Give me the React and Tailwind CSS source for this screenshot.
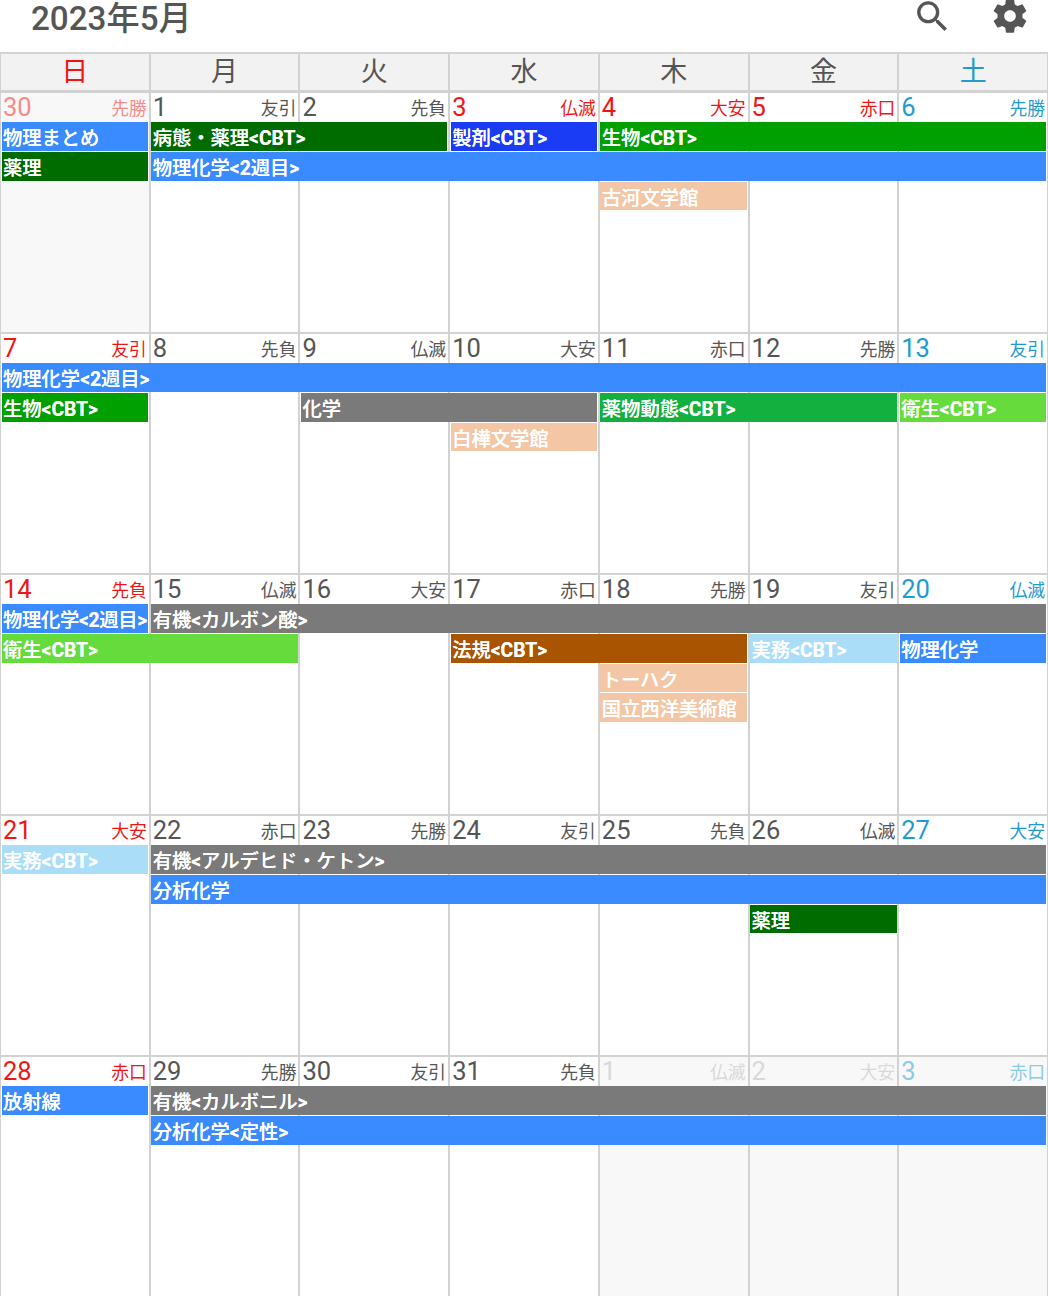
const COL = ['col-start-1','col-start-2','col-start-3','col-start-4','col-start-5','col-start-6','col-start-7'];
const SPAN = ['', 'col-span-1','col-span-2','col-span-3','col-span-4','col-span-5','col-span-6','col-span-7'];
const ROW = ['row-start-2','row-start-3','row-start-4','row-start-5'];

const BLUE = 'bg-[#3a8bff]';
const DARK = 'bg-[#006c00]';
const GREEN = 'bg-[#00a000]';
const GRAY = 'bg-[#7a7a7a]';
const PEACH = 'bg-[#f3c6a5]';
const LIME = 'bg-[#66dc3c]';
const SKY = 'bg-[#aaddf8]';

const RED = 'text-[#f01515]';
const SAT = 'text-[#1f9bd1]';
const DEF = 'text-[#555555]';
const PINK = 'text-[#f88a8a]';
const FADE = 'text-[#d8d8d8]';
const SATF = 'text-[#8accE4]';

const WEEKS = [
  {
    days: [
      ['30','先勝',PINK,true],['1','友引',DEF],['2','先負',DEF],['3','仏滅',RED],['4','大安',RED],['5','赤口',RED],['6','先勝',SAT],
    ],
    events: [
      [0,0,1,'物理まとめ',BLUE],[0,1,2,'病態・薬理<CBT>',DARK],[0,3,1,'製剤<CBT>','bg-[#1a3cf5]'],[0,4,3,'生物<CBT>',GREEN],
      [1,0,1,'薬理',DARK],[1,1,6,'物理化学<2週目>',BLUE],
      [2,4,1,'古河文学館',PEACH],
    ],
  },
  {
    days: [
      ['7','友引',RED],['8','先負',DEF],['9','仏滅',DEF],['10','大安',DEF],['11','赤口',DEF],['12','先勝',DEF],['13','友引',SAT],
    ],
    events: [
      [0,0,7,'物理化学<2週目>',BLUE],
      [1,0,1,'生物<CBT>',GREEN],[1,2,2,'化学',GRAY],[1,4,2,'薬物動態<CBT>','bg-[#13b040]'],[1,6,1,'衛生<CBT>',LIME],
      [2,3,1,'白樺文学館',PEACH],
    ],
  },
  {
    days: [
      ['14','先負',RED],['15','仏滅',DEF],['16','大安',DEF],['17','赤口',DEF],['18','先勝',DEF],['19','友引',DEF],['20','仏滅',SAT],
    ],
    events: [
      [0,0,1,'物理化学<2週目>',BLUE,'tracking-[-0.3px]'],[0,1,6,'有機<カルボン酸>',GRAY],
      [1,0,2,'衛生<CBT>',LIME],[1,3,2,'法規<CBT>','bg-[#a85400]'],[1,5,1,'実務<CBT>',SKY],[1,6,1,'物理化学',BLUE],
      [2,4,1,'トーハク',PEACH],[3,4,1,'国立西洋美術館',PEACH],
    ],
  },
  {
    days: [
      ['21','大安',RED],['22','赤口',DEF],['23','先勝',DEF],['24','友引',DEF],['25','先負',DEF],['26','仏滅',DEF],['27','大安',SAT],
    ],
    events: [
      [0,0,1,'実務<CBT>',SKY],[0,1,6,'有機<アルデヒド・ケトン>',GRAY],
      [1,1,6,'分析化学',BLUE],
      [2,5,1,'薬理',DARK],
    ],
  },
  {
    days: [
      ['28','赤口',RED],['29','先勝',DEF],['30','友引',DEF],['31','先負',DEF],['1','仏滅',FADE,true],['2','大安',FADE,true],['3','赤口',SATF,true],
    ],
    events: [
      [0,0,1,'放射線',BLUE],[0,1,6,'有機<カルボニル>',GRAY],
      [1,1,6,'分析化学<定性>',BLUE],
    ],
  },
];

const HEAD = [['日',RED],['月',DEF],['火',DEF],['水',DEF],['木',DEF],['金',DEF],['土',SAT]];

function Label({ text }) {
  return text.split(/([\x00-\x7f]+)/).map((part, i) =>
    i % 2 === 1 ? (
      <span key={i} className="font-bold">{part}</span>
    ) : (
      <span key={i}>{part}</span>
    ),
  );
}

function Week({ week }) {
  return (
    <div className="-ml-px grid h-[241px] w-[1049px] grid-cols-7 grid-rows-[29px_29.8px_29.8px_29.8px_29.8px_1fr] border-t-[2px] border-r border-[#d2d2d2]">
      {week.days.map((d, i) => (
        <div
          key={'bg' + i}
          className={`${COL[i]} row-span-full border-l-[2px] border-[#d2d2d2] ${d[3] ? 'bg-[#f8f8f8]' : 'bg-white'}`}
        />
      ))}
      {week.days.map((d, i) => (
        <div
          key={'h' + i}
          className={`${COL[i]} row-start-1 z-10 flex items-start justify-between pl-[4px] pr-[2px] ${d[2]}`}
        >
          <span className="text-[25.5px] leading-[29px]">{d[0]}</span>
          <span className="mt-[3px] text-[17.8px] leading-[26px]">{d[1]}</span>
        </div>
      ))}
      {week.events.map((e, i) => (
        <div
          key={'e' + i}
          className={`${COL[e[1]]} ${SPAN[e[2]]} ${ROW[e[0]]} ${e[1] === 0 ? 'ml-[3px] pl-px' : 'ml-[2.5px] pl-[1.5px]'} z-20 mr-[0.7px] h-[28.8px] min-w-0 overflow-hidden whitespace-nowrap text-[19.3px] font-medium leading-[33px] text-white [text-shadow:0_0_0.6px_#ffffff] ${e[4]} ${e[5] || ''}`}
        >
          <Label text={e[3]} />
        </div>
      ))}
    </div>
  );
}

export default function App() {
  return (
    <div className="h-[1296px] w-[1048px] overflow-hidden bg-white font-['Roboto','Noto_Sans_CJK_JP',sans-serif]">
      <header className="flex h-[52px] items-start justify-between overflow-hidden pl-[31px] pr-[18px]">
        <h1 className="text-[33.2px] font-medium leading-[38px] text-[#555555]">2023年5月</h1>
        <div className="-mt-[4px] flex gap-[37px] text-[#555555]">
          <svg viewBox="0 0 24 24" className="h-[41px] w-[41px]" fill="currentColor">
            <path d="M15.5 14h-.79l-.28-.27C15.41 12.59 16 11.11 16 9.5 16 5.91 13.09 3 9.5 3S3 5.91 3 9.5 5.91 16 9.5 16c1.61 0 3.09-.59 4.23-1.57l.27.28v.79l5 4.99L20.49 19l-4.99-5zm-6 0C7.01 14 5 11.99 5 9.5S7.01 5 9.5 5 14 7.01 14 9.5 11.99 14 9.5 14z" />
          </svg>
          <svg viewBox="0 0 24 24" className="h-[40px] w-[40px]" fill="currentColor">
            <path d="M19.43 12.98c.04-.32.07-.64.07-.98s-.03-.66-.07-.98l2.11-1.65c.19-.15.24-.42.12-.64l-2-3.46c-.12-.22-.39-.3-.61-.22l-2.49 1c-.52-.4-1.08-.73-1.69-.98l-.38-2.65C14.46 2.18 14.25 2 14 2h-4c-.25 0-.46.18-.49.42l-.38 2.65c-.61.25-1.17.59-1.69.98l-2.49-1c-.23-.09-.49 0-.61.22l-2 3.46c-.13.22-.07.49.12.64l2.11 1.65c-.04.32-.07.65-.07.98s.03.66.07.98l-2.11 1.65c-.19.15-.24.42-.12.64l2 3.46c.12.22.39.3.61.22l2.49-1c.52.4 1.08.73 1.69.98l.38 2.65c.03.24.24.42.49.42h4c.25 0 .46-.18.49-.42l.38-2.65c.61-.25 1.17-.59 1.69-.98l2.49 1c.23.09.49 0 .61-.22l2-3.46c.12-.22.07-.49-.12-.64l-2.11-1.65zM12 15.5c-1.93 0-3.5-1.57-3.5-3.5s1.57-3.5 3.5-3.5 3.5 1.57 3.5 3.5-1.57 3.5-3.5 3.5z" />
          </svg>
        </div>
      </header>
      <div className="-ml-px grid h-[39px] w-[1049px] grid-cols-7 border-t-[2px] border-r border-b border-[#d2d2d2] bg-[#f2f2f2]">
        {HEAD.map(([t, c]) => (
          <div key={t} className={`border-l-[2px] border-[#d2d2d2] text-center text-[27px] leading-[37px] ${c}`}>
            {t}
          </div>
        ))}
      </div>
      {WEEKS.map((w, i) => (
        <Week key={i} week={w} />
      ))}
    </div>
  );
}
